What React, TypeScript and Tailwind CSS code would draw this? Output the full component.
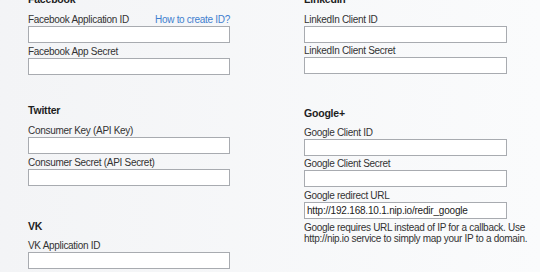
import React from 'react';

const font = { fontFamily: '"Liberation Sans", Arial, sans-serif' };

function Heading({ text, className }: { text: string; className: string }) {
  return (
    <div className={`h-[13px] whitespace-nowrap text-[10.5px] leading-[13px] font-bold tracking-[-0.2px] text-[#1e1e1e] ${className}`}>
      {text}
    </div>
  );
}

function Field({
  label,
  className,
  value,
  link,
}: {
  label: string;
  className: string;
  value?: string;
  link?: string;
}) {
  return (
    <div className={className}>
      <div className="flex h-[13px] items-center justify-between whitespace-nowrap text-[10px] leading-[13px] tracking-[-0.3px] text-[#333]">
        <span>{label}</span>
        {link && <span className="text-[#3f7fcf]">{link}</span>}
      </div>
      <input
        readOnly
        value={value || ''}
        className="block h-[17px] w-full border border-[#a8abb0] bg-white px-[2px] text-[10px] leading-[15px] tracking-[-0.2px] text-[#222] outline-none"
        style={font}
      />
    </div>
  );
}

export default function App() {
  return (
    <div
      className="h-[272px] w-[540px] overflow-hidden bg-gradient-to-r from-[#f3f4f6] to-[#fafbfc]"
      style={font}
    >
      <div className="-mt-[7px] grid grid-cols-[202px_203px] gap-x-[74px] pl-[28px]">
        {/* left column */}
        <div className="flex flex-col">
          <Heading text="Facebook" className="" />
          <Field label="Facebook Application ID" link="How to create ID?" className="mt-[7px]" />
          <Field label="Facebook App Secret" className="mt-[2px]" />

          <Heading text="Twitter" className="mt-[29px]" />
          <Field label="Consumer Key (API Key)" className="mt-[7px]" />
          <Field label="Consumer Secret (API Secret)" className="mt-[2px]" />

          <Heading text="VK" className="mt-[34px]" />
          <Field label="VK Application ID" className="mt-[6px]" />
        </div>

        {/* right column */}
        <div className="flex flex-col">
          <Heading text="LinkedIn" className="" />
          <Field label="LinkedIn Client ID" className="mt-[7px]" />
          <Field label="LinkedIn Client Secret" className="mt-[1px]" />

          <Heading text="Google+" className="mt-[33px]" />
          <Field label="Google Client ID" className="mt-[6px]" />
          <Field label="Google Client Secret" className="mt-[1px]" />
          <Field label="Google redirect URL" value="http://192.168.10.1.nip.io/redir_google" className="mt-[2px]" />
          <div className="mt-[3px] whitespace-nowrap text-[10px] leading-[11px] tracking-[-0.3px] text-[#333]">
            Google requires URL instead of IP for a callback. Use
            <br />
            http://nip.io service to simply map your IP to a domain.
          </div>
        </div>
      </div>
    </div>
  );
}
